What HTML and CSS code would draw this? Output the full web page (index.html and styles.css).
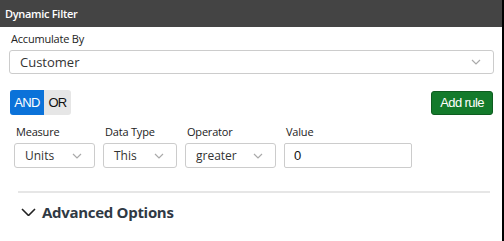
FILE: index.html
```html
<!DOCTYPE html>
<html lang="en">
<head>
  <meta charset="UTF-8" />
  <title>Dynamic Filter</title>
  <link rel="stylesheet" href="styles.css">
</head>
<body>
  <div class="panel">
    <div class="panel-header">Dynamic Filter</div>
    <div class="panel-body">
      <label class="field-label">Accumulate By</label>
      <div class="select select-wide">
        <span>Customer</span>
        <svg class="chevron" viewBox="0 0 10 6"><path d="M1 1l4 4 4-4" /></svg>
      </div>

      <div class="toolbar">
        <div class="toggle">
          <span class="toggle-item active">AND</span>
          <span class="toggle-item">OR</span>
        </div>
        <button class="add-rule">Add rule</button>
      </div>

      <div class="rule">
        <div class="col col-measure">
          <label class="col-label">Measure</label>
          <div class="select">
            <span>Units</span>
            <svg class="chevron" viewBox="0 0 10 6"><path d="M1 1l4 4 4-4" /></svg>
          </div>
        </div>
        <div class="col col-type">
          <label class="col-label">Data Type</label>
          <div class="select">
            <span>This</span>
            <svg class="chevron" viewBox="0 0 10 6"><path d="M1 1l4 4 4-4" /></svg>
          </div>
        </div>
        <div class="col col-op">
          <label class="col-label">Operator</label>
          <div class="select">
            <span>greater</span>
            <svg class="chevron" viewBox="0 0 10 6"><path d="M1 1l4 4 4-4" /></svg>
          </div>
        </div>
        <div class="col col-value">
          <label class="col-label">Value</label>
          <input class="value-input" type="text" value="0" />
        </div>
      </div>

      <div class="divider"></div>

      <div class="advanced">
        <svg class="adv-chevron" viewBox="0 0 15 8"><path d="M1 1l6.5 6.5L14 1" /></svg>
        <span>Advanced Options</span>
      </div>
    </div>
  </div>
</body>
</html>
```

FILE: styles.css
```css
* {
  box-sizing: border-box;
  margin: 0;
  padding: 0;
}

body {
  background: #000;
  width: 504px;
  height: 241px;
  overflow: hidden;
  font-family: 'Open Sans', sans-serif;
}

.panel {
  width: 502px;
  height: 241px;
  background: #fff;
}

.panel-header {
  height: 27px;
  line-height: 27px;
  background: #444;
  color: #fff;
  font-size: 11px;
  font-weight: 600;
  letter-spacing: -0.3px;
  padding-left: 5px;
}

.panel-body {
  padding: 4px 8px 0 9px;
}

.field-label {
  display: block;
  font-size: 11px;
  line-height: 15px;
  color: #222;
  letter-spacing: -0.2px;
  padding-left: 2px;
  margin-bottom: 4px;
}

.select {
  height: 25px;
  border: 1px solid #ccc;
  border-radius: 3px;
  display: flex;
  align-items: center;
  justify-content: space-between;
  padding: 0 12px 0 10px;
  font-size: 12px;
  color: #333;
  background: #fff;
}

.select-wide {
  height: 24px;
  font-size: 13px;
}

.chevron {
  width: 10px;
  height: 6px;
  fill: none;
  stroke: #aaa;
  stroke-width: 1.2;
}

.toolbar {
  display: flex;
  justify-content: space-between;
  align-items: center;
  margin-top: 16px;
  padding-left: 1px;
}

.toggle {
  display: flex;
  height: 25px;
  border-radius: 3px;
  overflow: hidden;
  font-family: 'Liberation Sans', Arial, sans-serif;
  font-size: 13px;
}

.toggle-item {
  display: flex;
  align-items: center;
  justify-content: center;
  letter-spacing: -0.7px;
  background: #e6e6e6;
  color: #111;
  width: 27px;
}

.toggle-item.active {
  background: #0b72d9;
  color: #fff;
  width: 34px;
}

.add-rule {
  width: 62px;
  height: 24px;
  background: #137a2b;
  border: 1px solid #0e5c20;
  border-radius: 3px;
  color: #fff;
  font-family: 'Liberation Sans', Arial, sans-serif;
  font-size: 13px;
  letter-spacing: -0.6px;
  margin-right: 1px;
}

.rule {
  display: flex;
  gap: 8px;
  margin-top: 9px;
  padding-left: 5px;
}

.col-label {
  display: block;
  font-size: 11px;
  line-height: 15px;
  color: #222;
  letter-spacing: -0.2px;
  padding-left: 2px;
  margin-bottom: 4px;
}

.col-measure { width: 81px; }
.col-type { width: 74px; }
.col-op { width: 91px; }
.col-value { width: 128px; }

.value-input {
  width: 100%;
  height: 25px;
  border: 1px solid #ccc;
  border-radius: 2px;
  padding: 0 9px;
  font-family: 'Liberation Sans', Arial, sans-serif;
  font-size: 13px;
  color: #111;
}

.divider {
  height: 2px;
  background: #e6e6e6;
  margin: 23px 4px 0 9px;
}

.advanced {
  display: flex;
  align-items: center;
  gap: 6px;
  margin-top: 9px;
  padding-left: 12px;
  font-size: 15px;
  font-weight: 700;
  letter-spacing: -0.3px;
  color: #2f3944;
}

.adv-chevron {
  width: 15px;
  height: 8px;
  fill: none;
  stroke: #222;
  stroke-width: 1.6;
}
```
